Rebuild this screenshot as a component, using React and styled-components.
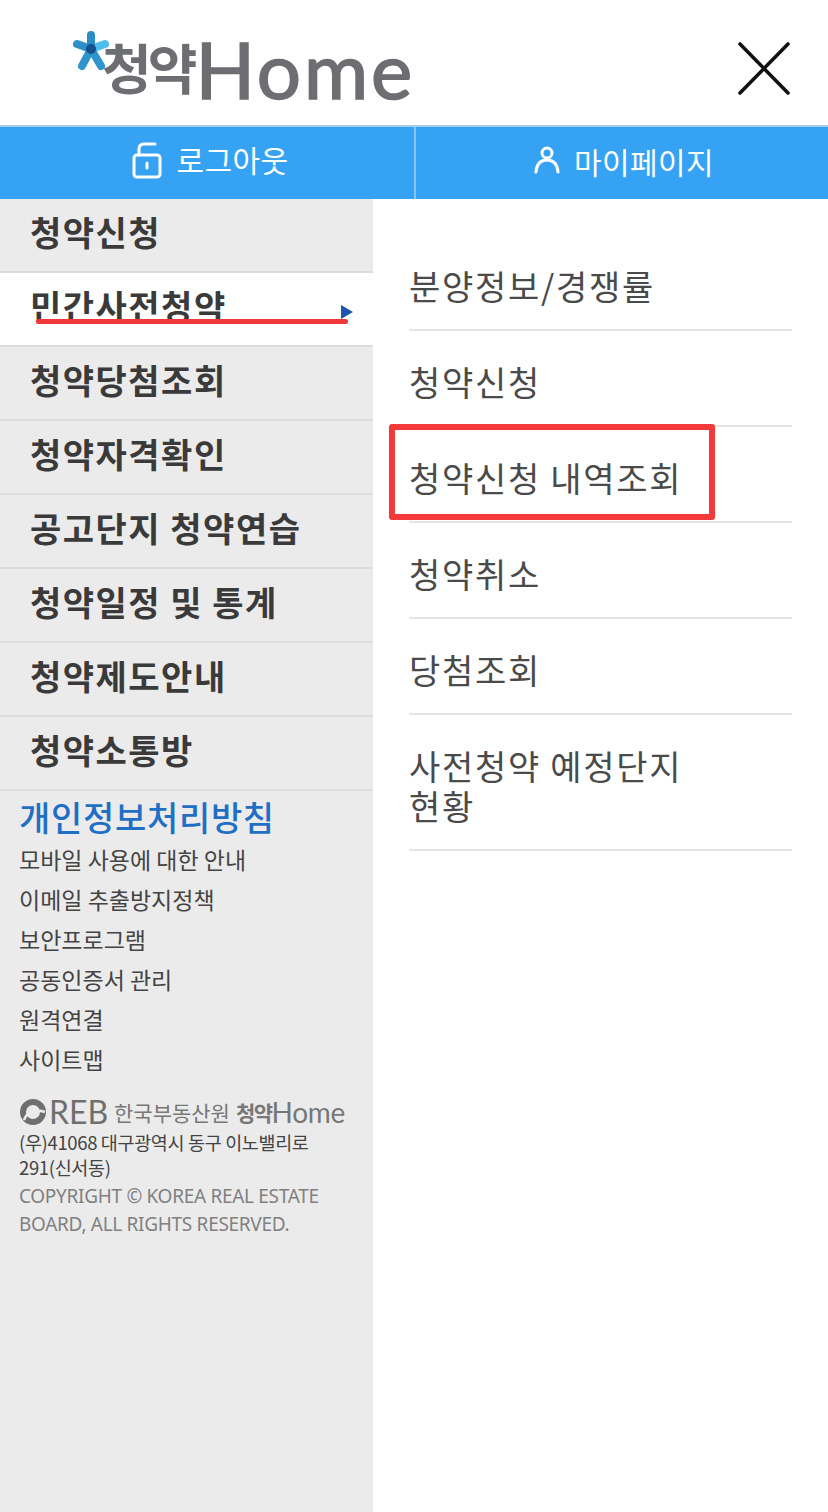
import React from "react";
import styled, { createGlobalStyle } from "styled-components";

const KR = `"Noto Sans CJK KR", "Noto Sans", sans-serif`;

const Global = createGlobalStyle`
  html, body { margin: 0; padding: 0; background: #fff; }
  * { box-sizing: border-box; }
  body { font-family: ${KR}; }
`;

const Page = styled.div`
  width: 828px;
  height: 1512px;
  position: relative;
  overflow: hidden;
  background: #fff;
  display: flex;
  flex-direction: column;
`;
const Header = styled.header`
  height: 125px;
  display: flex;
  align-items: flex-start;
  justify-content: space-between;
  padding: 28px 37px 0 69px;
`;
const Logo = styled.div`
  display: flex;
  align-items: flex-start;
  height: 74px;
  position: relative;
  width: 344px;
  white-space: nowrap;
`;
const LogoKr = styled.span`
  flex: none;
  font-family: ${KR};
  font-weight: 700;
  font-size: 54px;
  line-height: 74px;
  letter-spacing: -4px;
  color: #6d6e71;
  margin-left: 33px;
  margin-top: 2px;
`;
const LogoEn = styled.span`
  flex: none;
  font-family: "Lato", sans-serif;
  font-weight: 400;
  font-size: 78px;
  line-height: 74px;
  color: #6d6e71;
  letter-spacing: 3px;
  margin-left: 2px;
  margin-top: 4px;
  -webkit-text-stroke: 1.6px #6d6e71;
`;
const Star = styled.svg`
  position: absolute;
  left: 0;
  top: 0;
`;
const CloseButton = styled.button`
  border: 0;
  background: none;
  padding: 0;
  margin-top: 14px;
  width: 54px;
  height: 54px;
`;
const Tabs = styled.nav`
  height: 74px;
  background: #36a2f3;
  border-top: 2px solid #a9cdea;
  display: grid;
  grid-template-columns: 414px 1fr;
`;
const Tab = styled.a`
  display: flex;
  align-items: center;
  justify-content: center;
  gap: ${p => p.$gap}px;
  color: #fff;
  font-size: 30px;
  font-weight: 400;
  letter-spacing: 0.4px;
  padding-bottom: ${p => p.$pb}px;
  padding-left: ${p => p.$pl}px;
  border-left: ${p => (p.$divider ? "2px solid #86c4f4" : "0")};
`;
const TabLabel = styled.span`
  line-height: 40px;
  position: relative;
  top: -2px;
`;
const Body = styled.div`
  flex: 1;
  display: grid;
  grid-template-columns: 373px 1fr;
  min-height: 0;
`;
const Side = styled.aside`
  background: #ebebeb;
  display: flex;
  flex-direction: column;
`;
const SideItem = styled.a`
  height: 74px;
  flex: none;
  display: flex;
  align-items: flex-start;
  justify-content: space-between;
  padding: 9px 20px 0 30px;
  font-size: 34px;
  line-height: 48px;
  letter-spacing: 1.5px;
  font-weight: 700;
  color: #3a3a3a;
  background: ${p => (p.$active ? "#fff" : "transparent")};
  border-bottom: 2px solid #dcdcdc;
`;
const Arrow = styled.span`
  width: 0;
  height: 0;
  margin-top: 23px;
  border-left: 12px solid #1b55ad;
  border-top: 7px solid transparent;
  border-bottom: 7px solid transparent;
`;
const SideFoot = styled.div`
  padding: 4px 19px 0;
`;
const Privacy = styled.a`
  display: block;
  color: #1f6fc4;
  font-size: 34px;
  line-height: 44px;
  letter-spacing: 0.7px;
  font-weight: 500;
  white-space: nowrap;
`;
const SideLinks = styled.ul`
  list-style: none;
  margin: 0;
  padding: 0;
`;
const SideLink = styled.li`
  height: 40px;
  line-height: 40px;
  font-size: 23px;
  font-weight: 400;
  color: #444;
  white-space: nowrap;
`;
const Org = styled.div`
  display: flex;
  align-items: center;
  height: 30px;
  margin-top: 18px;
  color: #777;
  white-space: nowrap;
`;
const OrgMark = styled.svg`
  flex: none;
  margin-right: 2px;
`;
const OrgReb = styled.span`
  font-family: "Lato", sans-serif;
  font-size: 32px;
  line-height: 30px;
  font-weight: 400;
  color: #6f6f6f;
  margin-right: 8px;
  width: 57px;
`;
const OrgName = styled.span`
  font-size: 21px;
  letter-spacing: 0;
  margin-right: 6px;
`;
const OrgKr = styled.span`
  font-size: 21px;
  font-weight: 700;
  letter-spacing: -1.5px;
`;
const OrgEn = styled.span`
  font-family: "Lato", sans-serif;
  font-size: 28px;
  letter-spacing: -0.3px;
  line-height: 30px;
`;
const Address = styled.p`
  margin: 3px 0 0;
  font-size: 18.5px;
  line-height: 25px;
  color: #444;
  letter-spacing: -0.35px;
`;
const Copy = styled.p`
  margin: 2px 0 0;
  font-size: 19px;
  line-height: 28px;
  color: #808080;
  font-family: "Noto Sans", sans-serif;
  letter-spacing: -0.3px;
`;
const SubList = styled.ul`
  list-style: none;
  margin: 0;
  padding: 36px 36px 0;
`;
const SubItem = styled.li`
  min-height: 96px;
  padding: 31px 100px 0 0;
  font-size: 34px;
  line-height: 40px;
  letter-spacing: 1.7px;
  padding-bottom: ${p => (p.$tall ? "23px" : "0")};
  color: #4a4a4a;
  border-bottom: 2px solid #e4e4e4;
  width: 383px;
`;
const RedLine = styled.div`
  position: absolute;
  left: 36px;
  top: 319px;
  width: 312px;
  height: 5px;
  border-radius: 3px;
  background: #f0383a;
`;
const RedBox = styled.div`
  position: absolute;
  left: 389px;
  top: 424px;
  width: 326px;
  height: 96px;
  border: 6px solid #f4393a;
  border-radius: 3px;
`;

const menu = ["청약신청", "민간사전청약", "청약당첨조회", "청약자격확인", "공고단지 청약연습", "청약일정 및 통계", "청약제도안내", "청약소통방"];
const links = ["모바일 사용에 대한 안내", "이메일 추출방지정책", "보안프로그램", "공동인증서 관리", "원격연결", "사이트맵"];
const subs = ["분양정보/경쟁률", "청약신청", "청약신청 내역조회", "청약취소", "당첨조회"];

export default function App() {
  return (
    <Page>
      <Global />
      <Header>
        <Logo>
          <LogoKr>청약</LogoKr>
          <LogoEn>Home</LogoEn>
          <Star width="46" height="46" viewBox="0 0 46 46">
            <g strokeLinecap="round" strokeWidth="8" fill="none">
              <line x1="22" y1="21" x2="8" y2="16" stroke="#2f8fc6" />
              <line x1="22" y1="21" x2="36" y2="16" stroke="#4cbdec" />
              <line x1="22" y1="21" x2="13" y2="38" stroke="#2f95cc" />
              <line x1="22" y1="21" x2="32" y2="38" stroke="#2f95cc" />
              <line x1="22" y1="21" x2="22" y2="7" stroke="#2b8cc2" />
            </g>
            <circle cx="22" cy="21" r="5" fill="#14508c" />
          </Star>
        </Logo>
        <CloseButton aria-label="닫기">
          <svg width="54" height="54" viewBox="0 0 54 54">
            <path d="M3 2 L51 51 M51 2 L3 51" stroke="#111" strokeWidth="3.6" strokeLinecap="round" fill="none" />
          </svg>
        </CloseButton>
      </Header>
      <Tabs>
        <Tab $gap={15} $pb={5} $pl={6}>
          <svg width="30" height="37" viewBox="0 0 30 37" fill="none" stroke="#fff" strokeWidth="3" strokeLinecap="round">
            <rect x="2" y="13" width="26" height="22" rx="3" />
            <path d="M7 13 V7 Q7 2 12 2 H23" />
            <path d="M15 21 V26" />
          </svg>
          <TabLabel>로그아웃</TabLabel>
        </Tab>
        <Tab $gap={14} $pb={0} $pl={4} $divider>
          <svg width="26" height="28" viewBox="0 0 26 28" fill="none" stroke="#fff" strokeWidth="3" strokeLinecap="round" style={{ marginBottom: 7 }}>
            <circle cx="13" cy="7" r="5" />
            <path d="M2 26 Q3 14 13 14 Q23 14 24 26" />
          </svg>
          <TabLabel>마이페이지</TabLabel>
        </Tab>
      </Tabs>
      <Body>
        <Side>
          {menu.map((m, i) => (
            <SideItem key={m} $active={i === 1}>
              {m}
              {i === 1 && <Arrow />}
            </SideItem>
          ))}
          <SideFoot>
            <Privacy>개인정보처리방침</Privacy>
            <SideLinks>
              {links.map(l => <SideLink key={l}>{l}</SideLink>)}
            </SideLinks>
            <Org>
              <OrgMark width="28" height="28" viewBox="0 0 28 28" fill="none">
                <circle cx="14" cy="14" r="10" stroke="#6f6f6f" strokeWidth="6" />
                <path d="M5 22 Q10 9 26 14" stroke="#ebebeb" strokeWidth="2.5" />
              </OrgMark>
              <OrgReb>REB</OrgReb>
              <OrgName>한국부동산원</OrgName>
              <OrgKr>청약</OrgKr>
              <OrgEn>Home</OrgEn>
            </Org>
            <Address>(우)41068 대구광역시 동구 이노밸리로 291(신서동)</Address>
            <Copy>COPYRIGHT © KOREA REAL ESTATE BOARD, ALL RIGHTS RESERVED.</Copy>
          </SideFoot>
        </Side>
        <SubList>
          {subs.map(s => <SubItem key={s}>{s}</SubItem>)}
          <SubItem $tall>사전청약 예정단지 현황</SubItem>
        </SubList>
      </Body>
      <RedLine />
      <RedBox />
    </Page>
  );
}
